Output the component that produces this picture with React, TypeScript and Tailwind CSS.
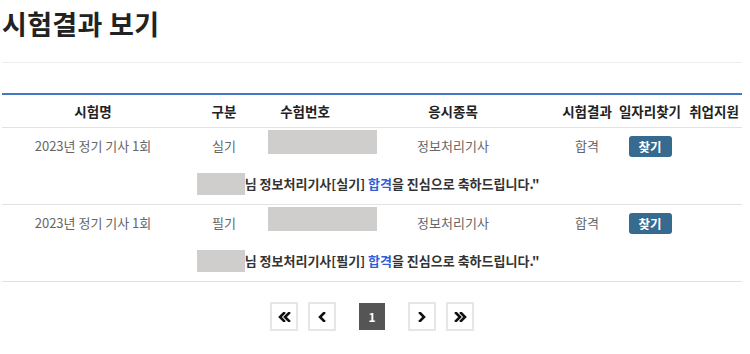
const cols = ["w-[182px]", "w-[80px]", "w-[82px]", "w-[214px]", "w-[54px]", "w-[72px]", "w-[56px]"];

const rows = [
  { name: "2023년 정기 기사 1회", kind: "실기", subject: "정보처리기사", result: "합격" },
  { name: "2023년 정기 기사 1회", kind: "필기", subject: "정보처리기사", result: "합격" },
];

const Chevron = ({ dir, double }: { dir: "left" | "right"; double?: boolean }) => {
  const one = dir === "left" ? "M6 1 L2 5 L6 9" : "M2 1 L6 5 L2 9";
  const two = dir === "left" ? "M11 1 L7 5 L11 9" : "M7 1 L11 5 L7 9";
  return (
    <svg width={double ? 13 : 8} height="10" viewBox={double ? "0 0 13 10" : "0 0 8 10"} fill="none">
      <path d={one} stroke="#111" strokeWidth="2.6" strokeLinecap="square" />
      {double && <path d={two} stroke="#111" strokeWidth="2.6" strokeLinecap="square" />}
    </svg>
  );
};

const PageBtn = ({ children }: { children: React.ReactNode }) => (
  <button className="w-[28px] h-[29px] border-2 border-[#e6e6e6] bg-white flex items-center justify-center">
    {children}
  </button>
);

export default function App() {
  return (
    <div className="w-[750px] h-[354px] bg-white font-['Noto_Sans_CJK_KR','Noto_Sans',sans-serif] overflow-hidden">
      <div className="ml-[2px] w-[740px]">
        <h1 className="pt-[5px] h-[42px] leading-[37px] text-[27px] font-bold text-[#222] tracking-[0.3px]">시험결과 보기</h1>
        <div className="mt-[20px] h-px bg-[#eeeeee]"></div>
        <div className="mt-[30px] border-t-2 border-[#4677c4]">
          <div className="flex h-[33px] items-center border-b border-[#e3e3e3] text-[13.5px] font-bold text-[#222]">
            {["시험명", "구분", "수험번호", "응시종목", "시험결과", "일자리찾기", "취업지원"].map((h, i) => (
              <div key={h} className={`${cols[i]} text-center whitespace-nowrap`}>{h}</div>
            ))}
          </div>
          {rows.map((r, idx) => (
            <div key={idx} className="border-b border-[#e3e3e3]">
              <div className="flex h-[36px] items-center text-[13px] text-[#666]">
                <div className={`${cols[0]} text-center`}>{r.name}</div>
                <div className={`${cols[1]} text-center`}>{r.kind}</div>
                <div className={`${cols[2]} self-start pt-[2px] pl-[4px]`}>
                  <div className="w-[109px] h-[24px] bg-[#d0cdcd]"></div>
                </div>
                <div className={`${cols[3]} text-center`}>{r.subject}</div>
                <div className={`${cols[4]} text-center`}>{r.result}</div>
                <div className={`${cols[5]} flex justify-center`}>
                  <button className="w-[43px] h-[21px] rounded-[3px] bg-[#366a8e] text-white text-[12.5px] font-bold leading-[21px]">찾기</button>
                </div>
                <div className={cols[6]}></div>
              </div>
              <div className="h-[40px] flex items-center justify-center pr-[8px]">
                <div className="w-[48px] h-[22px] bg-[#d0cdcd]"></div>
                <p className="text-[13px] font-bold text-[#333] whitespace-nowrap">
                  님 정보처리기사[{r.kind}] <span className="text-[#2f5fd6]">합격</span>을 진심으로 축하드립니다."
                </p>
              </div>
            </div>
          ))}
        </div>
        <div className="mt-[20px] flex justify-center items-center">
          <PageBtn><Chevron dir="left" double /></PageBtn>
          <div className="ml-[10px]"><PageBtn><Chevron dir="left" /></PageBtn></div>
          <div className="ml-[23px] w-[26px] h-[27px] bg-[#555] text-white text-[12px] font-bold flex items-center justify-center">1</div>
          <div className="ml-[23px]"><PageBtn><Chevron dir="right" /></PageBtn></div>
          <div className="ml-[10px]"><PageBtn><Chevron dir="right" double /></PageBtn></div>
        </div>
      </div>
    </div>
  );
}
